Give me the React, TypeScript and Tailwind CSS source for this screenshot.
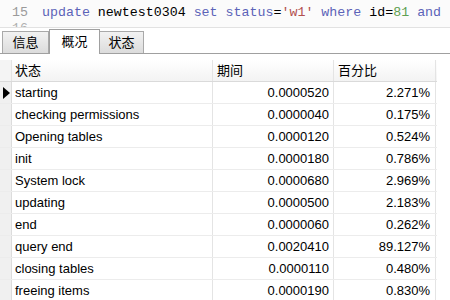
const rows = [
  ["starting", "0.0000520", "2.271%"],
  ["checking permissions", "0.0000040", "0.175%"],
  ["Opening tables", "0.0000120", "0.524%"],
  ["init", "0.0000180", "0.786%"],
  ["System lock", "0.0000680", "2.969%"],
  ["updating", "0.0000500", "2.183%"],
  ["end", "0.0000060", "0.262%"],
  ["query end", "0.0020410", "89.127%"],
  ["closing tables", "0.0000110", "0.480%"],
  ["freeing items", "0.0000190", "0.830%"],
];

const ui = { fontFamily: '"Liberation Sans", "Noto Sans CJK SC", sans-serif' };
const mono = { fontFamily: '"Liberation Mono", monospace' };

export default function App() {
  return (
    <div className="w-[450px] h-[300px] overflow-hidden bg-white text-[13px] text-black" style={ui}>
      {/* editor */}
      <div className="h-[28px] bg-[#fbfbfb] border-b border-[#e2e2e2] overflow-hidden text-[13.3px] leading-[16px] pt-[5px]" style={mono}>
        <div className="flex">
          <span className="w-[42px] pl-[12px] text-[#9a9a9a]">15</span>
          <span className="whitespace-nowrap">
            <span className="text-[#5b63b8]">update</span> newtest0304{" "}
            <span className="text-[#5b63b8]">set</span>{" "}
            <span className="text-[#5b63b8]">status</span>=<span className="text-[#b2504f]">'w1'</span>{" "}
            <span className="text-[#5b63b8]">where</span> id=<span className="text-[#5fa052]">81</span>{" "}
            <span className="text-[#5b63b8]">and</span>
          </span>
        </div>
        <div className="flex">
          <span className="w-[42px] pl-[12px] text-[#b0b0b0]">16</span>
        </div>
      </div>

      {/* tabs */}
      <div className="h-[26px] flex items-end pl-[2px] border-b border-[#a0a0a0]">
        <div className="h-[22px] w-[47px] flex items-center justify-center bg-gradient-to-b from-[#f2f2f2] to-[#dcdcdc] border border-b-0 border-[#a9a9a9]">
          信息
        </div>
        <div className="h-[25px] w-[51px] flex items-start pt-[2px] justify-center bg-white border border-b-0 border-[#a0a0a0] -mb-px relative">
          概况
        </div>
        <div className="h-[22px] w-[44px] flex items-center justify-center bg-gradient-to-b from-[#f2f2f2] to-[#dcdcdc] border border-b-0 border-l-0 border-[#a9a9a9]">
          状态
        </div>
      </div>

      {/* grid */}
      <div className="pt-[6px]">
        <div className="flex w-[437px] h-[22px] border-b border-[#dadada] bg-gradient-to-b from-white to-[#f3f3f3]">
          <div className="w-[12px] border-r border-[#e4e4e4] bg-[#f4f4f4]" />
          <div className="w-[201px] pl-[3px] flex items-center border-r border-[#e4e4e4]">状态</div>
          <div className="w-[121px] pl-[4px] flex items-center border-r border-[#e4e4e4]">期间</div>
          <div className="w-[102px] pl-[4px] flex items-center border-r border-[#e4e4e4]">百分比</div>
        </div>
        {rows.map((r, i) => (
          <div key={i} className="flex w-[437px] h-[22px] border-b border-[#ececec]">
            <div className="w-[12px] border-r border-[#dcdcdc] bg-[#f0f0f0] flex items-center">
              {i === 0 && (
                <svg width="8" height="12" viewBox="0 0 8 12" className="ml-[3px]">
                  <path d="M0 0 L7 6 L0 12 Z" fill="#000" />
                </svg>
              )}
            </div>
            <div className="w-[201px] pl-[3px] flex items-center border-r border-[#e4e4e4] whitespace-nowrap">{r[0]}</div>
            <div className="w-[121px] pr-[4px] flex items-center justify-end border-r border-[#e4e4e4]">{r[1]}</div>
            <div className="w-[102px] pr-[5px] flex items-center justify-end border-r border-[#e4e4e4]">{r[2]}</div>
          </div>
        ))}
      </div>
    </div>
  );
}
